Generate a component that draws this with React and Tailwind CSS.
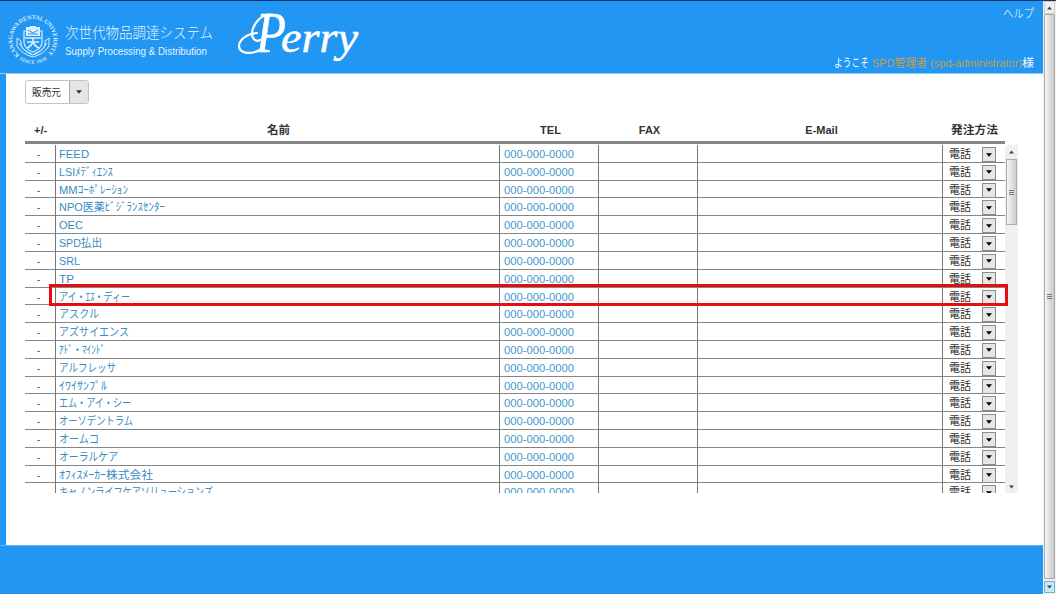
import React from "react";

const rows = [
  ["FEED", 30],
  ["LSIﾒﾃﾞｨｴﾝｽ", 54],
  ["MMｺｰﾎﾟﾚｰｼｮﾝ", 69],
  ["NPO医薬ﾋﾞｼﾞﾗﾝｽｾﾝﾀｰ", 106],
  ["OEC", 24],
  ["SPD払出", 43],
  ["SRL", 21],
  ["TP", 15],
  ["アイ・ｴｽ・ディー", 71],
  ["アスクル", 40],
  ["アズサイエンス", 70],
  ["ｱﾄﾞ・ﾏｲﾝﾄﾞ", 46],
  ["アルフレッサ", 57],
  ["ｲﾜｲｻﾝﾌﾟﾙ", 48],
  ["エム・アイ・シー", 72],
  ["オーソデントラム", 74],
  ["オームコ", 40],
  ["オーラルケア", 59],
  ["ｵﾌｨｽﾒｰｶｰ株式会社", 94],
  ["キャノンライフケアソリューションズ", 154],
];

const COLS = "grid grid-cols-[31px_444px_99px_99px_245px_62px]";

// Text squeezed or stretched to an exact advance width.
function Fit({ text, width, size, className = "", weight, x = 0 }) {
  return (
    <svg width={width + x} height="18" className={"block shrink-0 overflow-visible " + className}>
      <text x={x} y="13" fill="currentColor" fontSize={size} fontWeight={weight} textLength={width} lengthAdjust="spacingAndGlyphs">
        {text}
      </text>
    </svg>
  );
}

function Arrow({ up = false, className = "w-[7px]" }) {
  return (
    <svg height="4" viewBox="0 0 7 4" className={className}>
      <path d={up ? "M0 4L3.5 0L7 4Z" : "M0 0H7L3.5 4Z"} fill="currentColor" />
    </svg>
  );
}

function Seal() {
  return (
    <svg width="52" height="54" viewBox="0 0 52 54" className="shrink-0 overflow-visible text-[#d9efff]">
      <defs>
        <path id="ring" d="M12.5 42A20.5 20.5 0 1 1 39.5 42" fill="none" />
        <path id="low" d="M11.5 46A24.2 24.2 0 0 0 40.5 46" fill="none" />
      </defs>
      <g fill="currentColor" fontSize="6" fontWeight="700" className="font-['Liberation_Serif',serif]">
        <text><textPath href="#ring" textLength="97">KANAGAWA DENTAL UNIVERSITY</textPath></text>
        <text fontSize="5"><textPath href="#low" startOffset="1" textLength="29">SINCE 1910</textPath></text>
      </g>
      <g fill="none" stroke="currentColor">
        <path d="M17 18H35V30Q34 36 26 39Q18 36 17 30Z" strokeWidth="1.2" />
        <path d="M18 25H34M26 25V29M20 29H32M26 28Q25 33 20 35M26 28Q27 33 32 35" strokeWidth="1.7" />
        <path d="M10 25L14 28V32Q17 39 26 42Q35 39 38 32V28L42 25V33Q37 41 26 44Q15 41 10 33Z" strokeWidth="1" />
        <path d="M12.5 30Q15 37 25 41M39.5 30Q37 37 27 41" strokeWidth="1" />
      </g>
      <path d="M19 14H23V13H29V14H33V23H19Z" fill="currentColor" />
      <path d="M21 17L26 20L31 17M21 21H31" stroke="#2196f3" fill="none" />
    </svg>
  );
}

function Perry() {
  return (
    <svg width="126" height="60" viewBox="0 0 126 60" className="shrink-0 overflow-visible text-white">
      <path d="M36 5C25 2 16 14 15 23C15 30 20 32 23 30M20 23C8 24 2 31 2 36C2 43 12 44 18 42C21 41 23 40 24 39" fill="none" stroke="currentColor" strokeWidth="2.2" strokeLinecap="round" />
      <g fill="currentColor" stroke="currentColor" strokeWidth="0.5" fontStyle="italic" className="font-['Liberation_Serif',serif]">
        <text y="42">
          <tspan x="19" fontSize="56" textLength="30" lengthAdjust="spacingAndGlyphs">P</tspan>
          <tspan x="44" fontSize="44" textLength="77" lengthAdjust="spacingAndGlyphs">erry</tspan>
        </text>
      </g>
    </svg>
  );
}

function Row({ name, width }) {
  return (
    <div className={COLS + " h-[17.82px] shrink-0 border-b border-[#858585] text-[#3a8cc0]"}>
      <div className="border-r border-[#777] pr-[3px] text-center text-[11px] leading-[18px] text-[#a3343c]">-</div>
      <div className="border-r border-[#777] pl-[3px]"><Fit text={name} width={width} size={11.5} /></div>
      <div className="border-r border-[#777] pl-1"><Fit text="000-000-0000" width={70} size={11} className="text-[#3f98d0]" /></div>
      <div className="border-r border-[#777]" />
      <div className="border-r border-[#777]" />
      <div className="flex items-start pl-[6px] text-[#333]">
        <Fit text="電話" width={22} size={11.5} />
        <div className="ml-[11px] mt-[2px] flex h-[15px] w-[14px] items-center justify-center border border-[#8b8b8b] bg-[#e6e6e6] text-black">
          <Arrow className="w-[6px]" />
        </div>
      </div>
    </div>
  );
}

export default function App() {
  return (
    <div className="flex h-[594px] w-[1056px] overflow-hidden bg-[#2196f3] font-['Liberation_Sans','Noto_Sans_CJK_JP',sans-serif]">
      <div className="flex w-[1043px] flex-col border-t border-[#12356b]">
        <header className="flex h-[73px] shrink-0 justify-between border-b border-[#8fcdfb] pr-[9px] text-white">
          <div className="flex pl-[7px] pt-[12px]">
            <Seal />
            <div className="ml-[6px] pt-[12px]">
              <Fit text="次世代物品調達システム" width={148} size={14.5} weight="300" className="text-[#e6f4ff]" />
              <div className="-mt-px"><Fit text="Supply Processing & Distribution" width={142} size={10} className="text-[#e6f4ff]" /></div>
            </div>
            <div className="-mt-[3px] ml-[24px]"><Perry /></div>
          </div>
          <div className="flex flex-col items-end justify-between pb-px pt-[4px]">
            <Fit text="ヘルプ" width={31} size={12} weight="300" />
            <div className="flex">
              <Fit text="ようこそ" width={35} size={11.5} />
              <Fit text="SPD管理者 (spd-administrator)" width={150} size={11} x={3} className="text-[#c99b4c]" />
              <Fit text="様" width={12} size={11.5} />
            </div>
          </div>
        </header>
        <main className="ml-[6px] flex h-[471px] shrink-0 flex-col bg-white pl-[19px] pt-[6px]">
          <div className="flex h-[24px] w-[64px] shrink-0 overflow-hidden rounded-[3px] border border-[#c4c4c4] text-[#333]">
            <div className="flex w-[44px] justify-center border-r border-[#aaa] pr-[2px] pt-[2px]">
              <Fit text="販売元" width={29} size={10.5} />
            </div>
            <div className="flex flex-1 items-center justify-center bg-[#e6e6e6]"><Arrow className="w-[6px]" /></div>
          </div>
          <div className={COLS + " mt-[17px] h-[23px] w-[980px] shrink-0 border-b-[3px] border-[#858585] text-[11px] font-bold leading-[18px] text-[#333]"}>
            <div className="pl-[9px]">+/-</div>
            <div className="flex justify-center"><Fit text="名前" width={23} size={11.5} /></div>
            <div className="pl-0.5 text-center">TEL</div>
            <div className="pl-0.5 text-center">FAX</div>
            <div className="pl-0.5 text-center">E-Mail</div>
            <div className="pl-2"><Fit text="発注方法" width={47} size={11.5} /></div>
          </div>
          <div className="mt-px flex h-[348px] shrink-0 overflow-hidden">
            <div className="flex w-[980px] flex-col">
              {rows.map(([name, width]) => <Row key={name} name={name} width={width} />)}
            </div>
            <div className="flex w-[13px] flex-col items-center bg-[#f0f0f0] text-[#444]">
              <div className="flex h-[14px] items-center"><Arrow up className="w-[5px]" /></div>
              <div className="flex h-[66px] w-[11px] flex-col items-center justify-center gap-px border border-[#aaa] bg-linear-to-r from-[#f5f5f5] to-[#cfcfcf]">
                <i className="h-px w-[5px] bg-[#777]" /><i className="h-px w-[5px] bg-[#777]" /><i className="h-px w-[5px] bg-[#777]" />
              </div>
              <div className="flex flex-1 items-end pb-1"><Arrow className="w-[5px]" /></div>
            </div>
          </div>
        </main>
        <footer className="flex-1 border-t border-[#58b5fa]" />
      </div>
      <div className="flex w-[13px] flex-col items-center border-t border-[#12356b] bg-[#f0f0f0] text-[#444]">
        <div className="flex h-[13px] w-[11px] items-center justify-center border border-[#ccc]"><Arrow up className="w-[5px]" /></div>
        <div className="flex w-[11px] flex-1 flex-col items-center justify-center gap-px rounded-[1px] border border-[#aaa] bg-linear-to-r from-[#f5f5f5] to-[#c8c8cc]">
          <i className="h-px w-[5px] bg-[#777]" /><i className="h-px w-[5px] bg-[#777]" /><i className="h-px w-[5px] bg-[#777]" />
        </div>
        <div className="mb-px mt-[2px] flex h-[12px] w-[11px] items-center justify-center border border-[#6eb5d4] bg-[#c5e9f8]"><Arrow className="w-[5px]" /></div>
      </div>
      <div className="pointer-events-none absolute left-[49px] top-[284px] h-[22px] w-[959px] border-[3px] border-[#e60d12]" />
    </div>
  );
}
